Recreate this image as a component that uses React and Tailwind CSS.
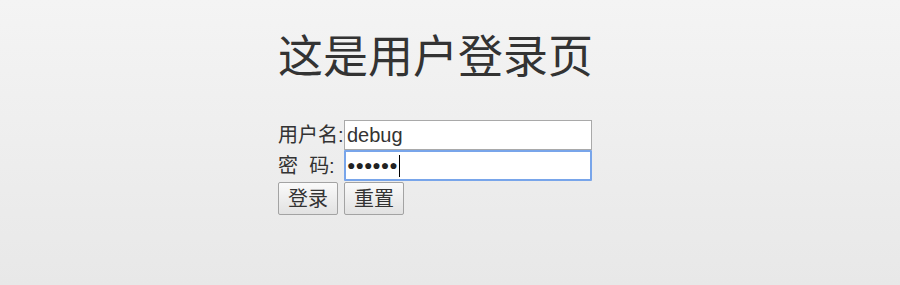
import React from "react";

export default function App() {
  const font = { fontFamily: '"Liberation Sans", "Noto Sans CJK SC", sans-serif' };
  return (
    <div
      className="min-h-[285px] bg-gradient-to-b from-[#f4f4f4] to-[#e8e8e8] text-[#333]"
      style={font}
    >
      <div className="ml-[278px] pt-[28px]">
        <h1 className="text-[45px] leading-[60px] font-normal text-[#333] whitespace-nowrap">
          这是用户登录页
        </h1>

        <form className="mt-[31px] text-[20px]" onSubmit={(e) => e.preventDefault()}>
          {/* Username */}
          <div className="flex items-center h-[31px]">
            <label className="w-[66px] whitespace-nowrap leading-none">用户名:</label>
            <input
              type="text"
              defaultValue="debug"
              className="w-[248px] h-[30px] bg-white border border-[#a9a9a9] px-[2px] text-[20px] text-[#333] outline-none"
              style={font}
            />
          </div>

          {/* Password */}
          <div className="flex items-center h-[31px]">
            <label className="w-[66px] whitespace-nowrap leading-none">密{"\u00a0\u00a0"}码:</label>
            <div className="w-[248px] h-[31px] bg-white border-2 border-[#78a5ea] rounded-[1px] px-[1px] flex items-center">
              <span className="text-[14px] tracking-[0px] text-[#222]">●●●●●●</span>
              <span className="ml-[1px] w-px h-[22px] bg-black" />
            </div>
          </div>

          {/* Buttons */}
          <div className="flex gap-[6px] mt-px">
            <button
              type="submit"
              className="w-[60px] h-[33px] border border-[#a3a3a3] rounded-[2px] bg-gradient-to-b from-[#fafafa] to-[#e2e2e2] text-[20px] leading-none text-[#333]"
              style={font}
            >
              登录
            </button>
            <button
              type="reset"
              className="w-[60px] h-[33px] border border-[#a3a3a3] rounded-[2px] bg-gradient-to-b from-[#fafafa] to-[#e2e2e2] text-[20px] leading-none text-[#333]"
              style={font}
            >
              重置
            </button>
          </div>
        </form>
      </div>
    </div>
  );
}
